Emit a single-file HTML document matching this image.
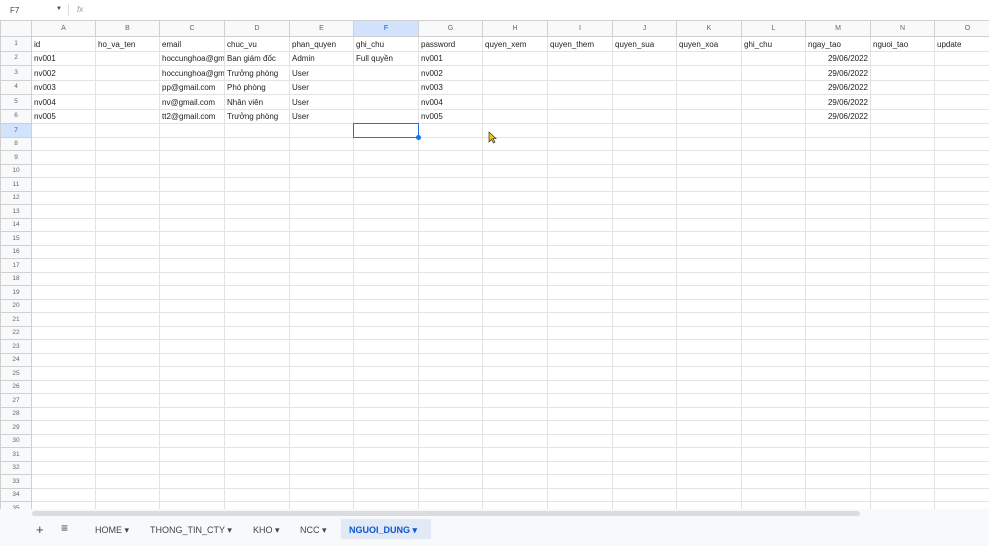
<!DOCTYPE html>
<html><head><meta charset="utf-8"><style>
*{margin:0;padding:0;box-sizing:border-box}
body{width:989px;height:546px;overflow:hidden;background:#fff;font-family:"Liberation Sans",Arial,sans-serif;position:relative}
#fb{position:absolute;left:0;top:0;width:989px;height:20px;font-size:8px;color:#444}
table{position:absolute;left:0;top:20px;border-collapse:collapse;table-layout:fixed;width:1000px}
td{border:1px solid #e2e3e3;font-size:8px;color:#222;padding:0 2px;white-space:nowrap;overflow:hidden;height:13.5px;line-height:11px;vertical-align:bottom}
tr.h td{background:#f8f9fa;color:#666;text-align:center;font-size:7px;height:16px;border-color:#d0d0d0;vertical-align:middle}
td.r{background:#f8f9fa;color:#666;text-align:center;font-size:6.5px;border-color:#d0d0d0;vertical-align:middle}
tr.d td{height:14.5px;padding-bottom:1px}
.rt{text-align:right}
</style></head><body>
<div id="fb"><span style="position:absolute;left:10px;top:6px">F7</span><span style="position:absolute;left:56px;top:6px;font-size:6px">▼</span><span style="position:absolute;left:68px;top:4px;width:1px;height:12px;background:#ddd"></span><span style="position:absolute;left:77px;top:5px;font-style:italic;color:#999">fx</span></div>
<table>
<colgroup><col style="width:31px"><col style="width:64px"><col style="width:64px"><col style="width:65px"><col style="width:65px"><col style="width:64px"><col style="width:65px"><col style="width:64px"><col style="width:65px"><col style="width:65px"><col style="width:64px"><col style="width:65px"><col style="width:64px"><col style="width:65px"><col style="width:64px"><col style="width:66px"></colgroup>
<tr class="h"><td></td><td>A</td><td>B</td><td>C</td><td>D</td><td>E</td><td style="background:#d3e3fd;color:#0b57d0">F</td><td>G</td><td>H</td><td>I</td><td>J</td><td>K</td><td>L</td><td>M</td><td>N</td><td>O</td></tr>
<tr class="d"><td class="r">1</td><td>id</td><td>ho_va_ten</td><td>email</td><td>chuc_vu</td><td>phan_quyen</td><td>ghi_chu</td><td>password</td><td>quyen_xem</td><td>quyen_them</td><td>quyen_sua</td><td>quyen_xoa</td><td>ghi_chu</td><td>ngay_tao</td><td>nguoi_tao</td><td>update</td></tr>
<tr class="d"><td class="r">2</td><td>nv001</td><td></td><td>hoccunghoa@gmail.com</td><td>Ban giám đốc</td><td>Admin</td><td>Full quyền</td><td>nv001</td><td></td><td></td><td></td><td></td><td></td><td class="rt">29/06/2022</td><td></td><td></td></tr>
<tr class="d"><td class="r">3</td><td>nv002</td><td></td><td>hoccunghoa@gmail.com</td><td>Trưởng phòng</td><td>User</td><td></td><td>nv002</td><td></td><td></td><td></td><td></td><td></td><td class="rt">29/06/2022</td><td></td><td></td></tr>
<tr class="d"><td class="r">4</td><td>nv003</td><td></td><td>pp@gmail.com</td><td>Phó phòng</td><td>User</td><td></td><td>nv003</td><td></td><td></td><td></td><td></td><td></td><td class="rt">29/06/2022</td><td></td><td></td></tr>
<tr class="d"><td class="r">5</td><td>nv004</td><td></td><td>nv@gmail.com</td><td>Nhân viên</td><td>User</td><td></td><td>nv004</td><td></td><td></td><td></td><td></td><td></td><td class="rt">29/06/2022</td><td></td><td></td></tr>
<tr class="d"><td class="r">6</td><td>nv005</td><td></td><td>tt2@gmail.com</td><td>Trưởng phòng</td><td>User</td><td></td><td>nv005</td><td></td><td></td><td></td><td></td><td></td><td class="rt">29/06/2022</td><td></td><td></td></tr>
<tr><td class="r" style="background:#d3e3fd;color:#0b57d0">7</td><td></td><td></td><td></td><td></td><td></td><td></td><td></td><td></td><td></td><td></td><td></td><td></td><td></td><td></td><td></td></tr>
<tr><td class="r">8</td><td></td><td></td><td></td><td></td><td></td><td></td><td></td><td></td><td></td><td></td><td></td><td></td><td></td><td></td><td></td></tr>
<tr><td class="r">9</td><td></td><td></td><td></td><td></td><td></td><td></td><td></td><td></td><td></td><td></td><td></td><td></td><td></td><td></td><td></td></tr>
<tr><td class="r">10</td><td></td><td></td><td></td><td></td><td></td><td></td><td></td><td></td><td></td><td></td><td></td><td></td><td></td><td></td><td></td></tr>
<tr><td class="r">11</td><td></td><td></td><td></td><td></td><td></td><td></td><td></td><td></td><td></td><td></td><td></td><td></td><td></td><td></td><td></td></tr>
<tr><td class="r">12</td><td></td><td></td><td></td><td></td><td></td><td></td><td></td><td></td><td></td><td></td><td></td><td></td><td></td><td></td><td></td></tr>
<tr><td class="r">13</td><td></td><td></td><td></td><td></td><td></td><td></td><td></td><td></td><td></td><td></td><td></td><td></td><td></td><td></td><td></td></tr>
<tr><td class="r">14</td><td></td><td></td><td></td><td></td><td></td><td></td><td></td><td></td><td></td><td></td><td></td><td></td><td></td><td></td><td></td></tr>
<tr><td class="r">15</td><td></td><td></td><td></td><td></td><td></td><td></td><td></td><td></td><td></td><td></td><td></td><td></td><td></td><td></td><td></td></tr>
<tr><td class="r">16</td><td></td><td></td><td></td><td></td><td></td><td></td><td></td><td></td><td></td><td></td><td></td><td></td><td></td><td></td><td></td></tr>
<tr><td class="r">17</td><td></td><td></td><td></td><td></td><td></td><td></td><td></td><td></td><td></td><td></td><td></td><td></td><td></td><td></td><td></td></tr>
<tr><td class="r">18</td><td></td><td></td><td></td><td></td><td></td><td></td><td></td><td></td><td></td><td></td><td></td><td></td><td></td><td></td><td></td></tr>
<tr><td class="r">19</td><td></td><td></td><td></td><td></td><td></td><td></td><td></td><td></td><td></td><td></td><td></td><td></td><td></td><td></td><td></td></tr>
<tr><td class="r">20</td><td></td><td></td><td></td><td></td><td></td><td></td><td></td><td></td><td></td><td></td><td></td><td></td><td></td><td></td><td></td></tr>
<tr><td class="r">21</td><td></td><td></td><td></td><td></td><td></td><td></td><td></td><td></td><td></td><td></td><td></td><td></td><td></td><td></td><td></td></tr>
<tr><td class="r">22</td><td></td><td></td><td></td><td></td><td></td><td></td><td></td><td></td><td></td><td></td><td></td><td></td><td></td><td></td><td></td></tr>
<tr><td class="r">23</td><td></td><td></td><td></td><td></td><td></td><td></td><td></td><td></td><td></td><td></td><td></td><td></td><td></td><td></td><td></td></tr>
<tr><td class="r">24</td><td></td><td></td><td></td><td></td><td></td><td></td><td></td><td></td><td></td><td></td><td></td><td></td><td></td><td></td><td></td></tr>
<tr><td class="r">25</td><td></td><td></td><td></td><td></td><td></td><td></td><td></td><td></td><td></td><td></td><td></td><td></td><td></td><td></td><td></td></tr>
<tr><td class="r">26</td><td></td><td></td><td></td><td></td><td></td><td></td><td></td><td></td><td></td><td></td><td></td><td></td><td></td><td></td><td></td></tr>
<tr><td class="r">27</td><td></td><td></td><td></td><td></td><td></td><td></td><td></td><td></td><td></td><td></td><td></td><td></td><td></td><td></td><td></td></tr>
<tr><td class="r">28</td><td></td><td></td><td></td><td></td><td></td><td></td><td></td><td></td><td></td><td></td><td></td><td></td><td></td><td></td><td></td></tr>
<tr><td class="r">29</td><td></td><td></td><td></td><td></td><td></td><td></td><td></td><td></td><td></td><td></td><td></td><td></td><td></td><td></td><td></td></tr>
<tr><td class="r">30</td><td></td><td></td><td></td><td></td><td></td><td></td><td></td><td></td><td></td><td></td><td></td><td></td><td></td><td></td><td></td></tr>
<tr><td class="r">31</td><td></td><td></td><td></td><td></td><td></td><td></td><td></td><td></td><td></td><td></td><td></td><td></td><td></td><td></td><td></td></tr>
<tr><td class="r">32</td><td></td><td></td><td></td><td></td><td></td><td></td><td></td><td></td><td></td><td></td><td></td><td></td><td></td><td></td><td></td></tr>
<tr><td class="r">33</td><td></td><td></td><td></td><td></td><td></td><td></td><td></td><td></td><td></td><td></td><td></td><td></td><td></td><td></td><td></td></tr>
<tr><td class="r">34</td><td></td><td></td><td></td><td></td><td></td><td></td><td></td><td></td><td></td><td></td><td></td><td></td><td></td><td></td><td></td></tr>
<tr><td class="r">35</td><td></td><td></td><td></td><td></td><td></td><td></td><td></td><td></td><td></td><td></td><td></td><td></td><td></td><td></td><td></td></tr>
</table>
<div style="position:absolute;left:353px;top:123px;width:66px;height:15px;border:1.5px solid #1a73e8"></div>
<div style="position:absolute;left:416px;top:135px;width:5px;height:5px;border-radius:50%;background:#1a73e8"></div>
<svg style="position:absolute;left:488px;top:131px" width="9" height="13" viewBox="0 0 9 13"><path d="M1 1 L1 11 L3.5 8.5 L5.5 12 L7 11 L5 7.5 L8 7.5 Z" fill="#f5c400" stroke="#333" stroke-width="0.7"/></svg>
<div style="position:absolute;left:0;top:509px;width:989px;height:37px;background:#f8f9fa"></div>
<div style="position:absolute;left:32px;top:511px;width:828px;height:5px;border-radius:3px;background:#dadce0"></div>
<div style="position:absolute;left:0;top:519px;width:989px;height:22px;font-size:9px;color:#444">
<span style="position:absolute;left:36px;top:3px;font-size:13px">+</span>
<span style="position:absolute;left:61px;top:2px;font-size:12px">≡</span>
<span style="position:absolute;left:95px;top:6px">HOME ▾</span>
<span style="position:absolute;left:150px;top:6px">THONG_TIN_CTY ▾</span>
<span style="position:absolute;left:253px;top:6px">KHO ▾</span>
<span style="position:absolute;left:300px;top:6px">NCC ▾</span>
<span style="position:absolute;left:341px;top:0;width:90px;height:20px;background:#e1e9f7"></span>
<span style="position:absolute;left:349px;top:6px;color:#0b57d0;font-weight:bold">NGUOI_DUNG ▾</span>
</div>
</body></html>
